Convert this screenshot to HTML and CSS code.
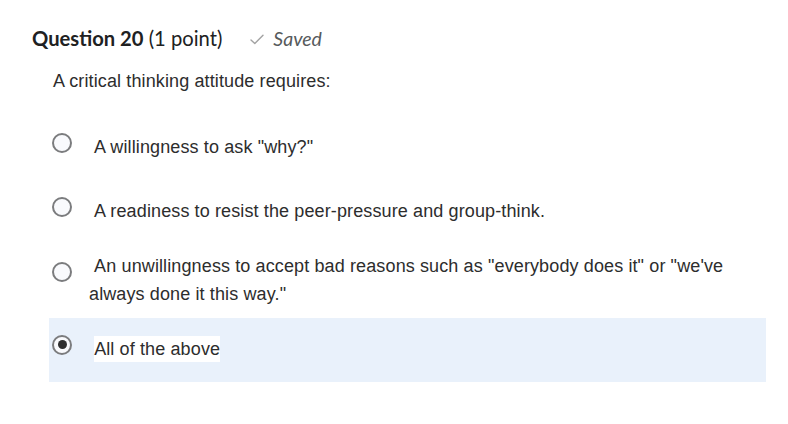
FILE: index.html
```html
<!DOCTYPE html>
<html lang="en">
<head>
<meta charset="utf-8">
<title>Question 20</title>
<link rel="stylesheet" href="styles.css">
</head>
<body>
<main class="question">
  <header class="q-header">
    <h2 class="q-title"><strong>Question 20</strong> (1 point)</h2>
    <span class="q-saved">
      <svg class="check" width="14" height="11" viewBox="0 0 14 11" aria-hidden="true"><path d="M1 6 L4.8 9.6 L13 1.2" fill="none" stroke="#a3a3a3" stroke-width="1.4" stroke-linecap="round" stroke-linejoin="round"/></svg>
      <em>Saved</em>
    </span>
  </header>
  <p class="q-text">A critical thinking attitude requires:</p>
  <div class="options">
    <label class="option">
      <span class="radio"></span>
      <span class="label">&nbsp;A willingness to ask "why?"</span>
    </label>
    <label class="option">
      <span class="radio"></span>
      <span class="label">&nbsp;A readiness to resist the peer-pressure and group-think.</span>
    </label>
    <label class="option option-multi">
      <span class="radio"></span>
      <span class="label">&nbsp;An unwillingness to accept bad reasons such as "everybody does it" or "we've always done it this way."</span>
    </label>
    <label class="option option-selected">
      <span class="radio radio-checked"></span>
      <span class="label">&nbsp;<span class="label-hl">All of the above</span></span>
    </label>
  </div>
</main>
</body>
</html>
```
FILE: styles.css
```css
html, body {
  margin: 0;
  padding: 0;
  background: #ffffff;
}

.question {
  padding: 26px 0 0 32px;
}

.q-header {
  display: flex;
  align-items: baseline;
  gap: 28px;
  height: 24px;
}

.q-title {
  margin: 0;
  font-family: Lato, "Open Sans", sans-serif;
  font-size: 20.2px;
  line-height: 24px;
  font-weight: 400;
  color: #202122;
}

.q-title strong {
  font-weight: 700;
}

.q-saved {
  display: inline-flex;
  align-items: baseline;
  gap: 9px;
  font-family: Lato, "Open Sans", sans-serif;
  font-size: 19.5px;
  line-height: 24px;
  color: #565a5c;
}

.check {
  display: block;
  align-self: center;
  margin-top: 1px;
}

.q-text {
  margin: 17px 0 0 21px;
  font-family: "Liberation Sans", Arial, sans-serif;
  font-size: 18px;
  letter-spacing: 0.12px;
  line-height: 28px;
  color: #2d2d2d;
}

.options {
  margin: 20px 0 0 17px;
  width: 717px;
  display: flex;
  flex-direction: column;
}

.option {
  display: flex;
  align-items: flex-start;
  padding: 18px 0 18px 3px;
  font-family: "Liberation Sans", Arial, sans-serif;
  font-size: 18px;
  letter-spacing: 0.12px;
  line-height: 28px;
  color: #2d2d2d;
}

.option-multi {
  padding: 9px 0 9.5px 3px;
}

.option-multi .radio {
  margin-top: 9.5px;
}

.option-selected {
  background: #e9f1fb;
  padding: 17px 0 19px 3px;
}

.radio {
  flex: none;
  box-sizing: border-box;
  width: 20px;
  height: 20px;
  margin-top: 0;
  border: 2px solid #7b7c7e;
  border-radius: 50%;
  background: #f9fafd;
  display: flex;
  align-items: center;
  justify-content: center;
}

.radio-checked::after {
  content: "";
  width: 9px;
  height: 9px;
  border-radius: 50%;
  background: #2f2f30;
}

.label {
  margin-left: 17px;
  flex: 1;
}

.label-hl {
  background: #ffffff;
  padding: 3px 0;
}
```
